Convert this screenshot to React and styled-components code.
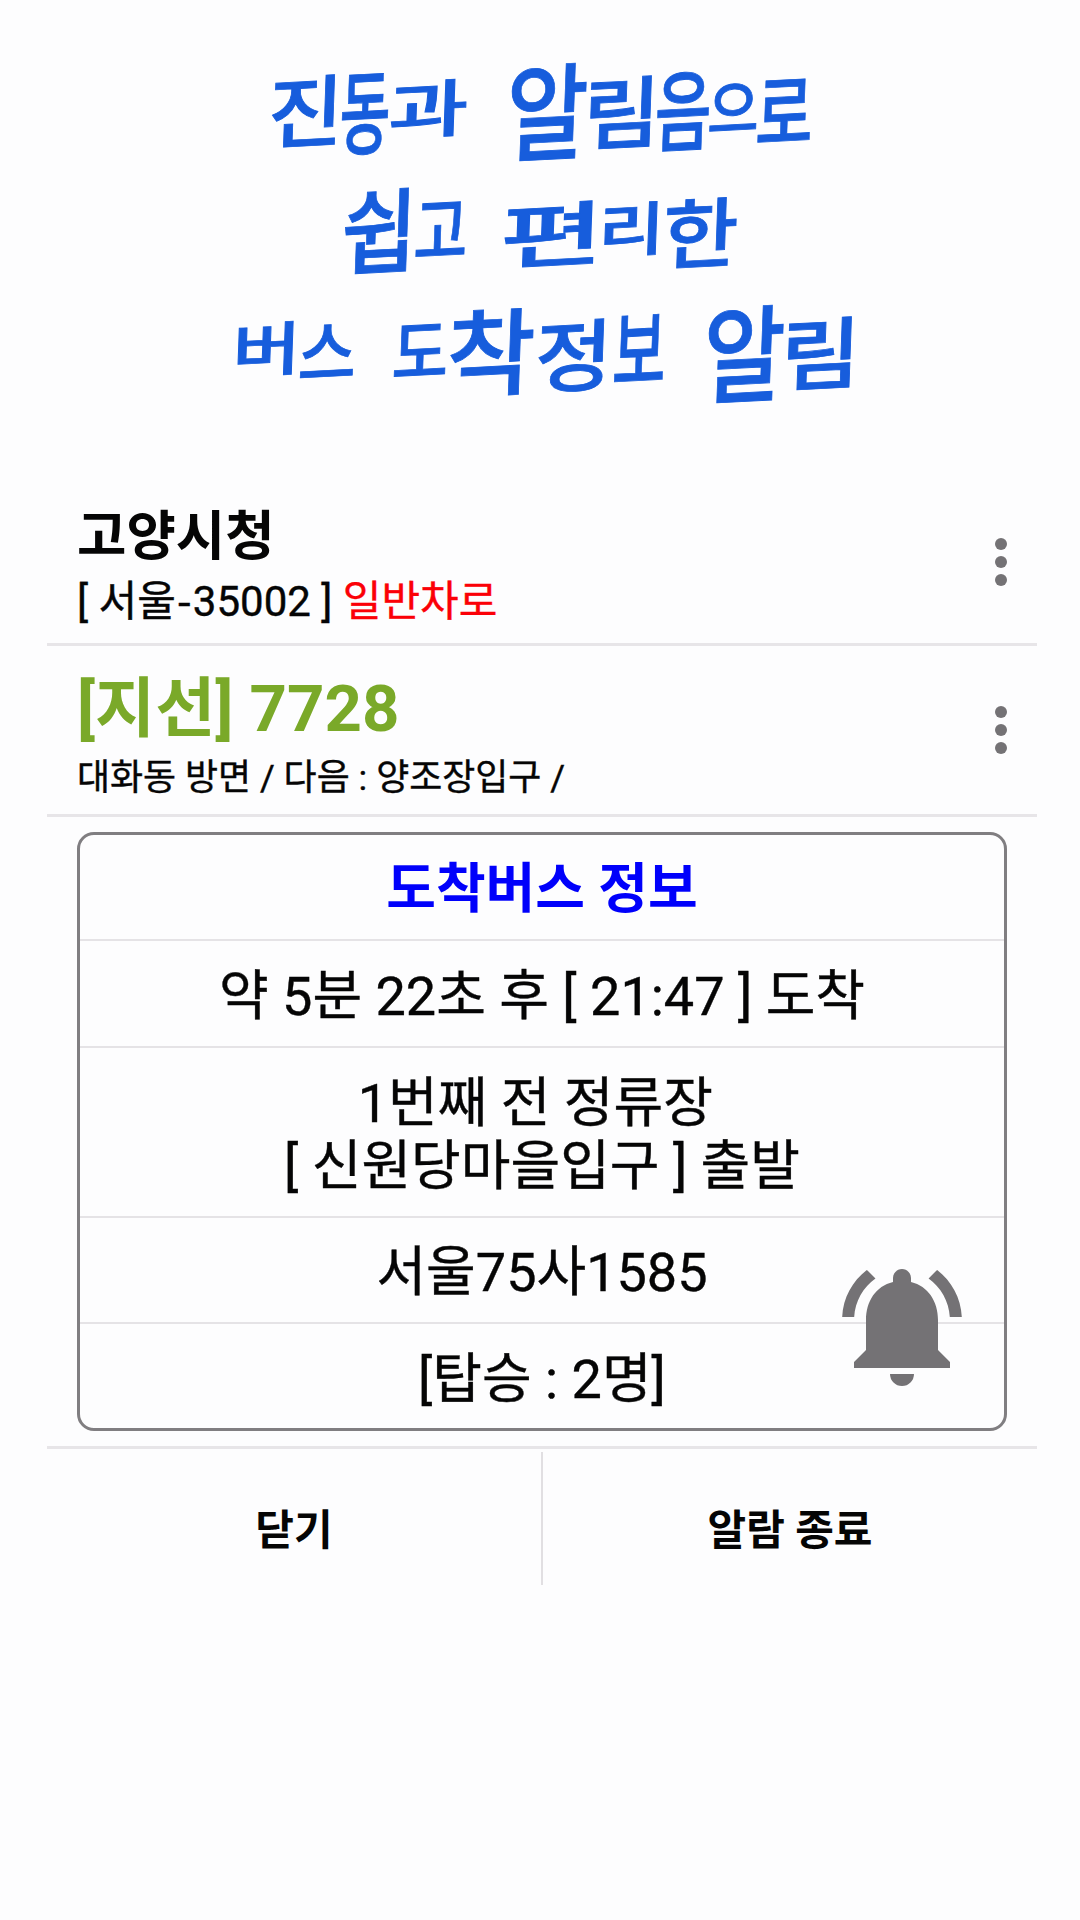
import React from "react";
import styled, { createGlobalStyle } from "styled-components";

// w: box width, size: font size, sx: horizontal squeeze, dy: vertical nudge
const headline = [
  {
    indent: 2,
    words: [
      {
        gap: 0,
        chars: [
          { c: "진", w: 71, size: 78, sx: 1.05, dy: -6 },
          { c: "동", w: 47, size: 92, sx: 0.6, dy: -6 },
          { c: "과", w: 80, size: 62, sx: 1.4, dy: -8 },
        ],
      },
      {
        gap: 39,
        chars: [
          { c: "알", w: 79, size: 105, sx: 0.85, dy: -6 },
          { c: "림", w: 71, size: 78, sx: 1.08, dy: -5 },
          { c: "음", w: 52, size: 88, sx: 0.7, dy: -7 },
          { c: "으", w: 48, size: 62, sx: 0.9, dy: -8 },
          { c: "로", w: 54, size: 82, sx: 0.76, dy: -5 },
        ],
      },
    ],
  },
  {
    indent: 2,
    words: [
      {
        gap: 0,
        chars: [
          { c: "쉽", w: 73, size: 92, sx: 0.9, dy: -8 },
          { c: "고", w: 50, size: 74, sx: 0.79, dy: -8 },
        ],
      },
      {
        gap: 38,
        chars: [
          { c: "편", w: 97, size: 70, sx: 1.62, dy: -3 },
          { c: "리", w: 62, size: 58, sx: 1.25, dy: -8 },
          { c: "한", w: 76, size: 76, sx: 1.08, dy: -5 },
        ],
      },
    ],
  },
  {
    indent: 13,
    words: [
      {
        gap: 0,
        chars: [
          { c: "버", w: 63, size: 58, sx: 1.28, dy: -9 },
          { c: "스", w: 57, size: 70, sx: 0.9, dy: -6 },
        ],
      },
      {
        gap: 38,
        chars: [
          { c: "도", w: 53, size: 68, sx: 0.9, dy: -7 },
          { c: "착", w: 89, size: 94, sx: 1.03, dy: -8 },
          { c: "정", w: 77, size: 78, sx: 1.08, dy: -4 },
          { c: "보", w: 53, size: 88, sx: 0.66, dy: -10 },
        ],
      },
      {
        gap: 39,
        chars: [
          { c: "알", w: 79, size: 105, sx: 0.85, dy: -6 },
          { c: "림", w: 74, size: 78, sx: 1.12, dy: -6 },
        ],
      },
    ],
  },
];

const MoreIcon = () => (
  <svg width="72" height="72" viewBox="0 0 24 24" fill="#747275">
    <circle cx="12" cy="6" r="2" />
    <circle cx="12" cy="12" r="2" />
    <circle cx="12" cy="18" r="2" />
  </svg>
);

const BellIcon = () => (
  <svg width="144" height="144" viewBox="0 0 24 24" fill="#747275">
    <path d="M7.58 4.08L6.15 2.65C3.75 4.48 2.17 7.3 2.03 10.5h2c.15-2.65 1.51-4.97 3.55-6.42zm12.39 6.42h2c-.15-3.2-1.73-6.02-4.12-7.85l-1.42 1.43c2.02 1.45 3.39 3.77 3.54 6.42zM18 11c0-3.07-1.64-5.64-4.5-6.32V4c0-.83-.67-1.5-1.5-1.5s-1.5.67-1.5 1.5v.68C7.63 5.36 6 7.92 6 11v5l-2 2v1h16v-1l-2-2v-5zM10 20a2 2 0 0 0 4 0z" />
  </svg>
);

const App = () => (
  <>
    <GlobalStyle />
    <Page>
      <Headline>
        {headline.map((line, i) => (
          <HeadlineLine key={i} $indent={line.indent}>
            {line.words.map((word, j) => (
              <Word key={j} $gap={word.gap}>
                {word.chars.map((s, k) => (
                  <Syllable key={k} $w={s.w} $size={s.size}>
                    <Glyph $sx={s.sx} $dy={s.dy}>
                      {s.c}
                    </Glyph>
                  </Syllable>
                ))}
              </Word>
            ))}
          </HeadlineLine>
        ))}
      </Headline>

      <Dialog>
        <InfoRow $height={163}>
          <InfoText>
            <StopName>고양시청</StopName>
            <StopId>
              [ 서울<Hyphen>-</Hyphen>35002 ] <Lane>일반차로</Lane>
            </StopId>
          </InfoText>
          <MenuButton $top={46}>
            <MoreIcon />
          </MenuButton>
        </InfoRow>
        <InfoRow $height={168}>
          <InfoText>
            <RouteName>[지선] 7728</RouteName>
            <Direction>대화동 방면 / 다음 : 양조장입구 /</Direction>
          </InfoText>
          <MenuButton $top={48}>
            <MoreIcon />
          </MenuButton>
        </InfoRow>

        <ArrivalCard>
          <CardTitle>도착버스 정보</CardTitle>
          <CardRow $height={105}>약 5분 22초 후 [ 21:47 ] 도착</CardRow>
          <CardRow $height={168}>
            1번째 전 정류장{" "}
            <br />[ 신원당마을입구 ] 출발
          </CardRow>
          <CardRow>서울75사1585</CardRow>
          <CardRow>[탑승 : 2명]</CardRow>
          <Bell>
            <BellIcon />
          </Bell>
        </ArrivalCard>

        <Actions>
          <ActionButton>닫기</ActionButton>
          <Separator />
          <ActionButton>알람 종료</ActionButton>
        </Actions>
      </Dialog>
    </Page>
  </>
);

const GlobalStyle = createGlobalStyle`
  * {
    box-sizing: border-box;
  }
  body {
    margin: 0;
    background: #fdfdfe;
  }
`;

const Page = styled.div`
  width: 1080px;
  height: 1920px;
  overflow: hidden;
  background: #fdfdfe;
  color: #050505;
  font-family: Roboto, "Noto Sans CJK KR", sans-serif;
`;

const Headline = styled.h1`
  margin: 0;
  height: 480px;
  padding-top: 52px;
  color: #175ddc;
  font-family: "Noto Sans CJK KR", sans-serif;
  font-weight: 500;
`;

const HeadlineLine = styled.div`
  display: flex;
  justify-content: center;
  height: 121px;
  padding-left: ${({ $indent }) => $indent}px;
  align-items: center;
`;

const Word = styled.span`
  display: flex;
  align-items: center;
  margin-left: ${({ $gap }) => $gap}px;
`;

const Syllable = styled.span`
  display: flex;
  justify-content: center;
  width: ${({ $w }) => $w}px;
  font-size: ${({ $size }) => $size}px;
  line-height: 1;
`;

const Glyph = styled.span`
  flex: none;
  transform: translateY(${({ $dy }) => $dy}px) rotate(-3deg) skewX(-5deg)
    scaleX(${({ $sx }) => $sx});
  -webkit-text-stroke: 0.8px currentColor;
`;

const Dialog = styled.main`
  width: 990px;
  margin-left: 47px;
`;

const InfoRow = styled.section`
  display: flex;
  justify-content: space-between;
  height: ${({ $height }) => $height + 3}px;
  padding-left: 30px;
  border-bottom: 3px solid #e7e5e8;
`;

const InfoText = styled.div`
  white-space: nowrap;
`;

const StopName = styled.div`
  margin-top: 25px;
  font-size: 53.7px;
  font-weight: bold;
  line-height: 64px;
`;

const StopId = styled.div`
  margin-top: 8px;
  font-size: 42px;
  line-height: 49px;
  -webkit-text-stroke: 0.4px currentColor;
`;

const Hyphen = styled.span`
  display: inline-block;
  width: 17px;
  font-family: "Noto Sans CJK KR", sans-serif;
  line-height: 1;
  text-align: center;
`;

const Lane = styled.span`
  color: #fb0007;
`;

const RouteName = styled.div`
  margin-top: 24px;
  color: #7aa929;
  font-size: 65.3px;
  font-weight: bold;
  line-height: 77px;
`;

const Direction = styled.div`
  margin-top: 10px;
  font-size: 35.9px;
  line-height: 42px;
  -webkit-text-stroke: 0.4px currentColor;
`;

const MenuButton = styled.div`
  width: 72px;
  height: 72px;
  margin-top: ${({ $top }) => $top}px;
`;

const ArrivalCard = styled.section`
  position: relative;
  width: 930px;
  height: 599px;
  margin: 15px 0 15px 30px;
  border: 3px solid #807e81;
  border-radius: 17px;
`;

const CardRow = styled.div`
  display: flex;
  align-items: center;
  justify-content: center;
  height: ${({ $height = 104 }) => $height + 2}px;
  padding-top: 5px;
  border-bottom: 2px solid #e5e3e6;
  font-size: 54px;
  line-height: 63px;
  text-align: center;
  white-space: pre-wrap;
  -webkit-text-stroke: 0.4px currentColor;

  &:nth-child(5) {
    border-bottom: 0;
  }
`;

const CardTitle = styled(CardRow)`
  color: #0000fb;
  font-weight: bold;
  -webkit-text-stroke: 0;
`;

const Bell = styled.div`
  position: absolute;
  top: 419px;
  right: 30px;
  width: 144px;
  height: 144px;
`;

const Actions = styled.footer`
  display: flex;
  height: 139px;
  border-top: 3px solid #e7e5e8;
`;

const ActionButton = styled.div`
  display: flex;
  flex: 1;
  align-items: center;
  justify-content: center;
  padding-top: 18px;
  font-size: 42px;
  font-weight: bold;
`;

const Separator = styled.div`
  width: 2px;
  margin-top: 3px;
  background: #e1dfe2;
`;

export default App;
